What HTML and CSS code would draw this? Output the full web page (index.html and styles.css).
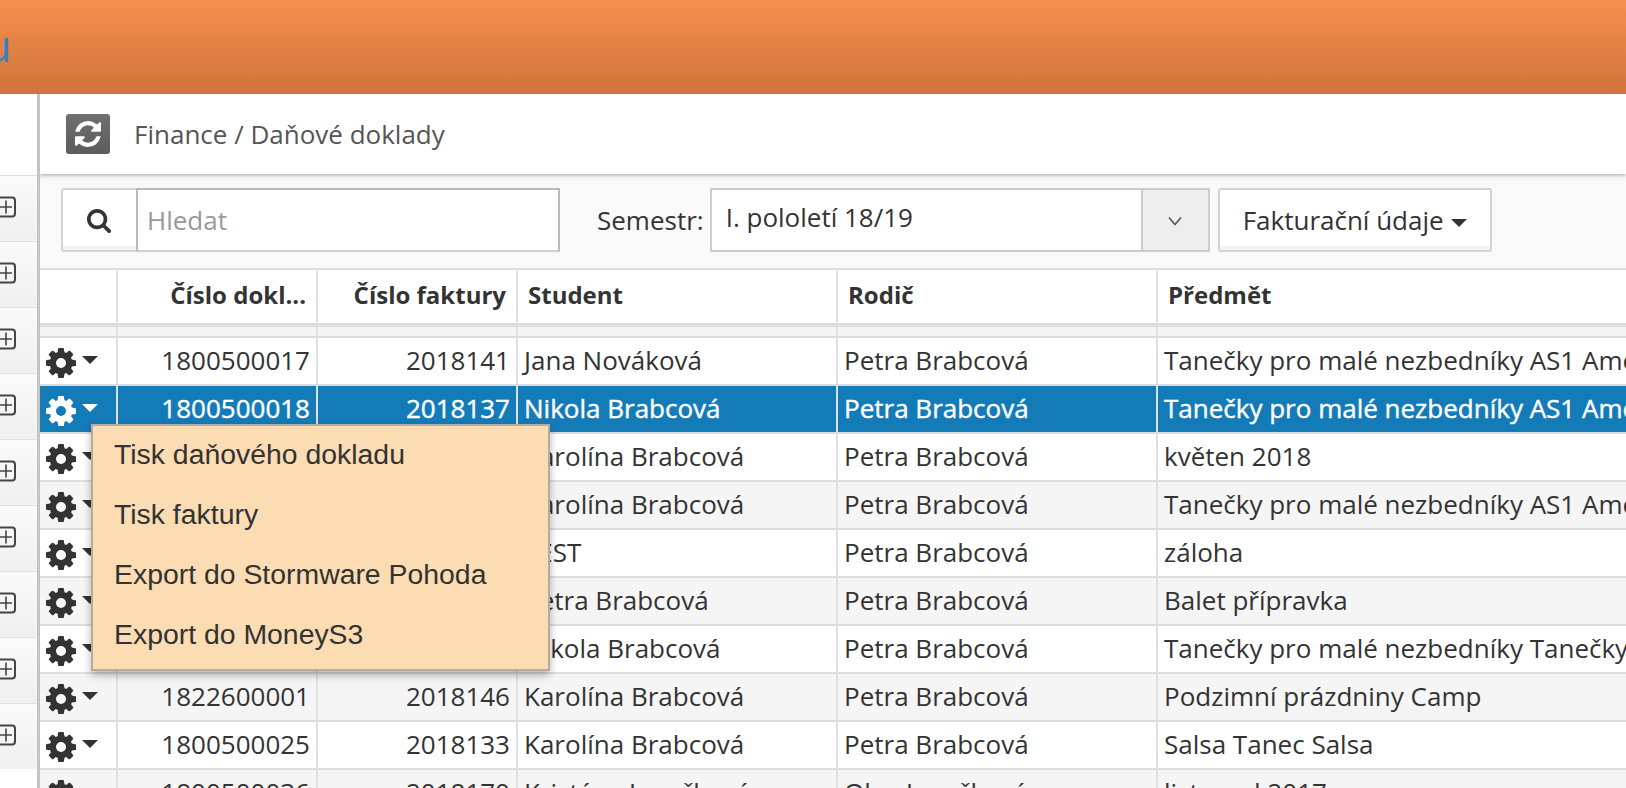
FILE: index.html
```html
<!DOCTYPE html>
<html lang="cs">
<head>
<meta charset="utf-8">
<title>Finance / Daňové doklady</title>
<link rel="stylesheet" href="styles.css">
</head>
<body>
<svg class="defs" width="0" height="0" aria-hidden="true">
  <defs>
    <symbol id="cog" viewBox="128 128 1536 1536"><path d="M1152 896q0-106-75-181t-181-75-181 75-75 181 75 181 181 75 181-75 75-181zm512-109v222q0 12-8 23t-20 13l-185 28q-19 54-39 91 35 50 107 138 10 12 10 25t-9 23q-27 37-99 108t-94 71q-12 0-26-9l-138-108q-44 23-91 38-16 136-29 186-7 28-36 28h-222q-14 0-24.5-8.5t-11.5-21.5l-28-184q-49-16-90-37l-141 107q-10 9-25 9-14 0-25-11-126-114-165-168-7-10-7-23 0-12 8-23 15-21 51-66.5t54-70.5q-27-50-41-99l-183-27q-13-2-21-12.5t-8-23.5v-222q0-12 8-23t19-13l186-28q14-46 39-92-40-57-107-138-10-12-10-24 0-10 9-23 26-36 98.5-107.5t94.5-71.5q13 0 26 10l138 107q44-23 91-38 16-136 29-186 7-28 36-28h222q14 0 24.5 8.5t11.5 21.5l28 184q49 16 90 37l142-107q9-9 24-9 13 0 25 10 129 119 165 170 7 8 7 22 0 12-8 23-15 21-51 66.5t-54 70.5q26 50 41 98l183 28q13 2 21 12.5t8 23.5z"/></symbol>
    <symbol id="plus" viewBox="0 0 17 22"><path d="M-2 1.5h14a3 3 0 0 1 3 3v13a3 3 0 0 1-3 3h-14" fill="none" stroke="currentColor" stroke-width="2"/><path d="M-2 11h14M6 4.5v13" fill="none" stroke="currentColor" stroke-width="1.6"/></symbol>
  </defs>
</svg>
<header class="topbar"><span class="logo">u</span></header>
<div class="layout">
  <aside class="sidebar">
    <div class="side-head"></div>
    <ul class="side-list">
      <li class="side-item"><svg class="plus"><use href="#plus"/></svg></li>
      <li class="side-item"><svg class="plus"><use href="#plus"/></svg></li>
      <li class="side-item"><svg class="plus"><use href="#plus"/></svg></li>
      <li class="side-item"><svg class="plus"><use href="#plus"/></svg></li>
      <li class="side-item"><svg class="plus"><use href="#plus"/></svg></li>
      <li class="side-item"><svg class="plus"><use href="#plus"/></svg></li>
      <li class="side-item"><svg class="plus"><use href="#plus"/></svg></li>
      <li class="side-item"><svg class="plus"><use href="#plus"/></svg></li>
      <li class="side-item"><svg class="plus"><use href="#plus"/></svg></li>
    </ul>
  </aside>
  <main class="main">
    <div class="crumbbar">
      <button class="refresh" type="button" aria-label="Obnovit">
        <svg viewBox="128 128 1536 1536" class="refresh-icon"><path d="M1639 1056q0 5-1 7-64 268-268 434.5t-478 166.5q-146 0-282.5-55t-243.5-157l-129 129q-19 19-45 19t-45-19-19-45v-448q0-26 19-45t45-19h448q26 0 45 19t19 45-19 45l-137 137q71 66 161 102t187 36q134 0 250-65t186-179q11-17 53-117 8-23 30-23h192q13 0 22.5 9.5t9.5 22.5zm25-800v448q0 26-19 45t-45 19h-448q-26 0-45-19t-19-45 19-45l138-138q-148-137-349-137-134 0-250 65t-186 179q-11 17-53 117-8 23-30 23h-199q-13 0-22.5-9.5t-9.5-22.5v-7q65-268 270-434.5t480-166.5q146 0 284 55.5t245 156.5l130-129q19-19 45-19t45 19 19 45z"/></svg>
      </button>
      <span class="crumb">Finance / Daňové doklady</span>
    </div>
    <div class="filters">
      <div class="search">
        <button class="search-btn" type="button" aria-label="Hledat">
          <svg viewBox="64 128 1664 1664" class="search-icon"><path d="M1216 832q0-185-131.5-316.5t-316.5-131.5-316.5 131.5-131.5 316.5 131.5 316.5 316.5 131.5 316.5-131.5 131.5-316.5zm512 832q0 52-38 90t-90 38q-54 0-90-38l-343-342q-179 124-399 124-143 0-273.5-55.5t-225-150-150-225-55.5-273.5 55.5-273.5 150-225 225-150 273.5-55.5 273.5 55.5 225 150 150 225 55.5 273.5q0 220-124 399l343 343q37 37 37 90z"/></svg>
        </button>
        <div class="search-input">Hledat</div>
      </div>
      <span class="semestr-label">Semestr:</span>
      <div class="select">
        <span class="select-value">I. pololetí 18/19</span>
        <span class="select-arrow"><svg viewBox="0 0 16 10" class="chevron"><path d="M2 1.5l6 7 6-7" fill="none" stroke="#555" stroke-width="1.6"/></svg></span>
      </div>
      <button class="billing" type="button">Fakturační údaje<span class="caret"></span></button>
    </div>
    <table class="grid">
      <colgroup><col class="c1"><col class="c2"><col class="c3"><col class="c4"><col class="c5"><col class="c6"></colgroup>
      <thead>
        <tr><th></th><th class="num">Číslo dokl...</th><th class="num">Číslo faktury</th><th>Student</th><th>Rodič</th><th>Předmět</th></tr>
      </thead>
      <tbody>
        <tr class="stub"><td></td><td></td><td></td><td></td><td></td><td></td></tr>
        <tr><td class="act"><svg class="cog"><use href="#cog"/></svg><span class="caret"></span></td><td class="num">1800500017</td><td class="num">2018141</td><td>Jana Nováková</td><td>Petra Brabcová</td><td>Tanečky pro malé nezbedníky AS1 Amerika</td></tr>
        <tr class="sel"><td class="act"><svg class="cog"><use href="#cog"/></svg><span class="caret"></span></td><td class="num">1800500018</td><td class="num">2018137</td><td>Nikola Brabcová</td><td>Petra Brabcová</td><td>Tanečky pro malé nezbedníky AS1 Amerika</td></tr>
        <tr><td class="act"><svg class="cog"><use href="#cog"/></svg><span class="caret"></span></td><td class="num">1800500019</td><td class="num">2018138</td><td>Karolína Brabcová</td><td>Petra Brabcová</td><td>květen 2018</td></tr>
        <tr class="alt"><td class="act"><svg class="cog"><use href="#cog"/></svg><span class="caret"></span></td><td class="num">1800500020</td><td class="num">2018139</td><td>Karolína Brabcová</td><td>Petra Brabcová</td><td>Tanečky pro malé nezbedníky AS1 Amerika</td></tr>
        <tr><td class="act"><svg class="cog"><use href="#cog"/></svg><span class="caret"></span></td><td class="num">1800500021</td><td class="num">2018140</td><td>TEST</td><td>Petra Brabcová</td><td>záloha</td></tr>
        <tr class="alt"><td class="act"><svg class="cog"><use href="#cog"/></svg><span class="caret"></span></td><td class="num">1800500022</td><td class="num">2018142</td><td>Petra Brabcová</td><td>Petra Brabcová</td><td>Balet přípravka</td></tr>
        <tr><td class="act"><svg class="cog"><use href="#cog"/></svg><span class="caret"></span></td><td class="num">1800500023</td><td class="num">2018143</td><td>Nikola Brabcová</td><td>Petra Brabcová</td><td>Tanečky pro malé nezbedníky Tanečky</td></tr>
        <tr class="alt"><td class="act"><svg class="cog"><use href="#cog"/></svg><span class="caret"></span></td><td class="num">1822600001</td><td class="num">2018146</td><td>Karolína Brabcová</td><td>Petra Brabcová</td><td>Podzimní prázdniny Camp</td></tr>
        <tr><td class="act"><svg class="cog"><use href="#cog"/></svg><span class="caret"></span></td><td class="num">1800500025</td><td class="num">2018133</td><td>Karolína Brabcová</td><td>Petra Brabcová</td><td>Salsa Tanec Salsa</td></tr>
        <tr class="alt"><td class="act"><svg class="cog"><use href="#cog"/></svg><span class="caret"></span></td><td class="num">1800500036</td><td class="num">2018170</td><td>Kristýna Janečková</td><td>Olga Janečková</td><td>listopad 2017</td></tr>
      </tbody>
    </table>
    <ul class="menu">
      <li>Tisk daňového dokladu</li>
      <li>Tisk faktury</li>
      <li>Export do Stormware Pohoda</li>
      <li>Export do MoneyS3</li>
    </ul>
  </main>
</div>
</body>
</html>
```
FILE: styles.css
```css
* { box-sizing: border-box; }
html, body { margin: 0; height: 100%; overflow: hidden; }
body { width: 1626px; height: 788px; font-family: "Open Sans", sans-serif; color: #333; background: #fff; }
.defs { position: absolute; }

.topbar { height: 94px; background: linear-gradient(#f58f4f, #d0733a); overflow: hidden; display: flex; align-items: center; }
.logo { margin-left: -15px; margin-top: -2px; font-size: 43px; line-height: 50px; color: #3a7fc0; font-family: "Open Sans", sans-serif; }

.layout { display: flex; height: 694px; }
.sidebar { width: 40px; flex: none; background: #fff; border-right: 3px solid #c4c4c4; overflow: hidden; }
.side-head { height: 81px; }
.side-list { list-style: none; margin: 0; padding: 0; }
.side-item { height: 66px; border-top: 1px solid #e2e2e2; background: linear-gradient(#fafafa, #f0f0f0); display: flex; align-items: center; }
.plus { width: 17px; height: 22px; margin-top: -3px; color: #444; }

.main { position: relative; flex: 1; min-width: 0; background: #f9f9f9; overflow: hidden; }
.crumbbar { height: 80px; background: #fff; box-shadow: 0 1px 4px rgba(0,0,0,.35); display: flex; align-items: center; padding-left: 26px; position: relative; }
.refresh { width: 44px; height: 40px; padding: 0; border: 0; border-radius: 3px; background: linear-gradient(#707070, #5c5c5c); display: flex; align-items: center; justify-content: center; }
.refresh-icon { width: 26px; height: 26px; fill: #fff; }
.crumb { margin-left: 24px; font-size: 26px; color: #555; }

.filters { height: 94px; padding: 14px 0 0 21px; display: flex; align-items: flex-start; }
.search { display: flex; width: 499px; height: 64px; }
.search-btn { width: 75px; height: 64px; padding: 0 2px 0 0; background: #fff; border: 2px solid #d4d4d4; border-right: 0; border-radius: 3px 0 0 3px; box-shadow: inset 0 -4px 0 #f2f2f2; display: flex; align-items: center; justify-content: center; }
.search-icon { width: 24px; height: 24px; margin-top: 2px; fill: #333; }
.search-input { flex: 1; background: #fff; border: 2px solid #b9b9b9; border-bottom-color: #d0d0d0; padding-left: 9px; font-size: 26px; line-height: 60px; color: #999; }
.semestr-label { margin-left: 37px; font-size: 26px; line-height: 64px; color: #333; }
.select { margin-left: 6px; width: 500px; height: 64px; background: #fff; border: 2px solid #ccc; display: flex; }
.select-value { flex: 1; padding-left: 14px; font-size: 26px; line-height: 54px; color: #333; }
.select-arrow { width: 67px; background: #eee; border-left: 2px solid #ccc; display: flex; align-items: center; justify-content: center; }
.chevron { width: 16px; height: 10px; margin-top: 2px; }
.billing { margin-left: 8px; width: 274px; height: 64px; padding: 0 0 1px; background: #fff; border: 2px solid #d4d4d4; border-radius: 3px; box-shadow: inset 0 -4px 0 #f2f2f2; font: 26px "Open Sans", sans-serif; color: #333; display: flex; align-items: center; justify-content: center; }
.billing .caret { margin-left: 7px; margin-top: 6px; border-top-color: #333; }

.caret { display: inline-block; width: 0; height: 0; border-left: 8px solid transparent; border-right: 8px solid transparent; border-top: 8px solid #333; }

.grid { width: 1586px; table-layout: fixed; border-collapse: collapse; background: #fff; border-top: 2px solid #ddd; }
.c1 { width: 77px; } .c2 { width: 200px; } .c3 { width: 200px; } .c4 { width: 320px; } .c5 { width: 320px; } .c6 { width: 469px; }
.grid th, .grid td { border-left: 2px solid #e0e0e0; white-space: nowrap; overflow: hidden; padding: 0 6px; text-align: left; }
.grid th:first-child, .grid td:first-child { border-left: 0; }
.grid th { height: 56px; font-size: 24px; font-weight: 700; color: #333; padding: 0 10px 4px; border-bottom: 4px solid #ddd; }
.grid td { height: 48px; font-size: 26px; color: #333; padding-bottom: 2px; border-bottom: 2px solid #ddd; }
.grid th.num, .grid td.num { text-align: right; }
.grid .stub td { height: 12px; padding: 0; background: #f5f5f5; }
.grid .alt td { background: #f5f5f5; }
.grid .sel td { background: #147bb9; color: #fff; -webkit-text-stroke: 0.4px #fff; }
.grid .act { padding: 0 0 2px 6px; }
.cog { width: 30px; height: 30px; fill: #333; vertical-align: middle; }
.act .caret { margin-left: 6px; vertical-align: middle; margin-top: -6px; }
.sel .cog { fill: #fff; }
.sel .caret { border-top-color: #fff; }

.menu { position: absolute; left: 51px; top: 330px; width: 459px; height: 247px; margin: 0; padding: 0 0 0 21px; list-style: none; background: #fbdcb3; border: 2px solid #b5aa9c; box-shadow: 0 4px 8px rgba(0,0,0,.3); font-family: "Liberation Sans", Arial, sans-serif; font-size: 28.4px; color: #333; }
.menu li { height: 60px; line-height: 57px; }
```
